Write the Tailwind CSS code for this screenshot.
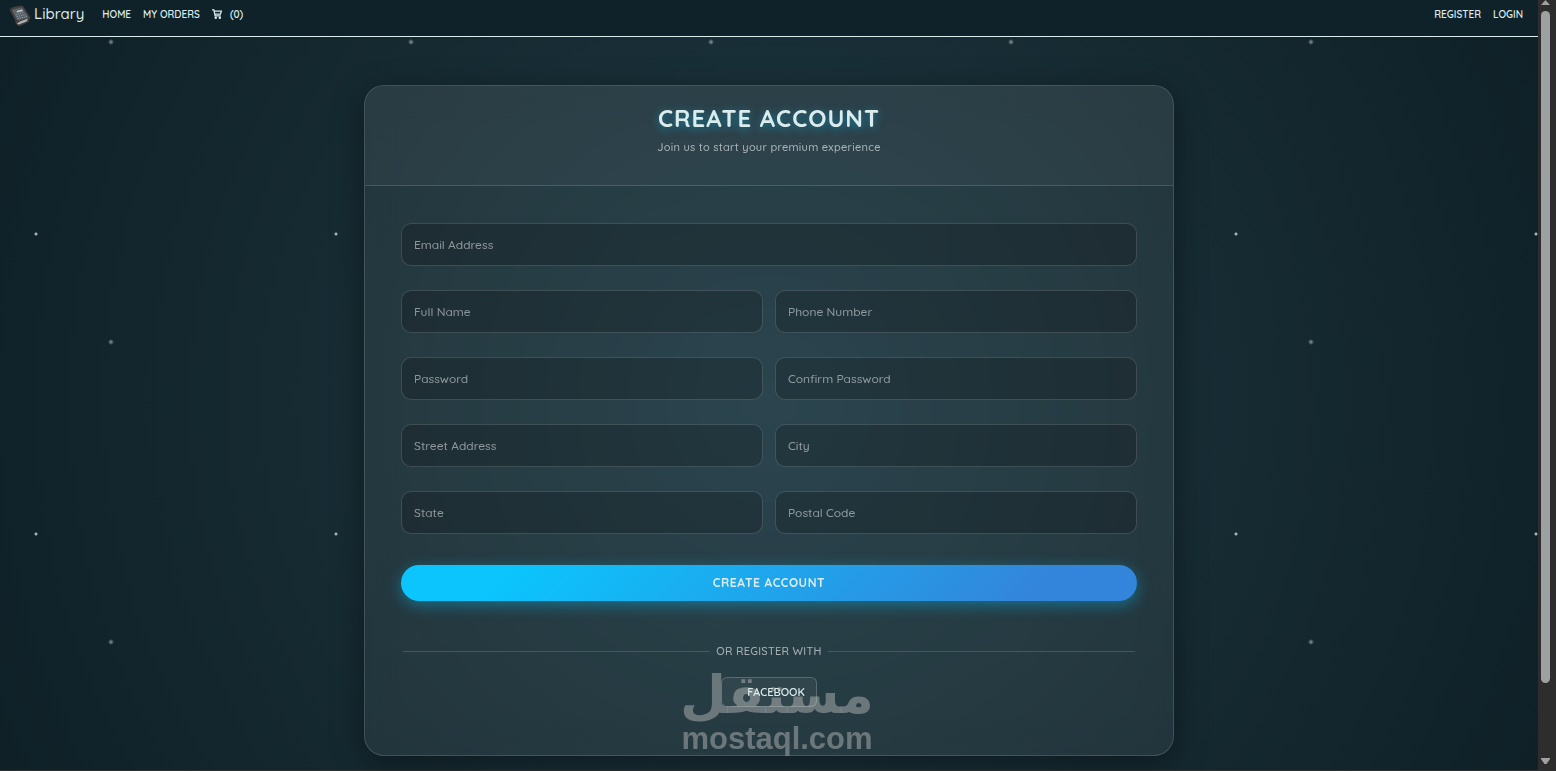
<!DOCTYPE html>
<html lang="en">
<head>
    <meta charset="UTF-8">
    <meta name="viewport" content="width=device-width, initial-scale=1.0">
    <title>Library - Register</title>
    <script src="https://cdn.jsdelivr.net/npm/@tailwindcss/browser@4"></script>
    <style>
        body {
            font-family: Quicksand, Lato, sans-serif;
        }
        /* Night sky: two stars per tile over a soft glow */
        .sky {
            background-image:
                radial-gradient(circle at 36px 197px, rgba(255,255,255,.75) 0, rgba(255,255,255,.6) 1px, transparent 2px),
                radial-gradient(circle at 111px 5px, rgba(255,255,255,.5) 0, rgba(255,255,255,.35) 1px, transparent 3px),
                radial-gradient(circle at center, #1e3a44 0%, #182d35 45%, #0f2027 100%);
            background-size: 300px 300px, 300px 300px, 100% 100%;
        }
    </style>
</head>
<body class="bg-[#303030] text-[#dcebeb]">
    <div class="flex min-h-screen pb-0.5">
        <div class="flex flex-1 flex-col">
            <!-- Navbar -->
            <header class="flex h-[37px] items-start border-b border-[#dcebeb] bg-[#102229] pl-2 pr-[15px]">
                <a href="#" class="flex h-7 items-center gap-0.5 text-[15px] font-medium">
                    <svg class="size-6" viewBox="0 0 24 24" aria-hidden="true">
                        <path d="M1.500 7.500L5 5l9-1.500 2 2 6.500 10-2 4.500-9.500 4.500-3-2.500L7 18z" fill="#45403f"/>
                        <path d="M4.500 7.500L14 5.500l6.500 10-10.500 3z" fill="#59636b"/>
                        <path d="M9 21.500l3-2 8-3-1.500 3-8 3z" fill="#aeb4b5"/>
                        <path d="M8.500 9l5.500-1.500 1 1.500-6 1.500z" fill="#c3c9ca"/>
                        <path d="M8 12.500l8-2M9 14.500l9-2M10 16.500l9-2M5 9l5 9" stroke="#8b969c" stroke-dasharray="1 1" fill="none"/>
                    </svg>
                    Library
                </a>
                <nav class="ml-[18px] flex h-7 flex-1 items-center gap-3 text-[10px] font-semibold">
                    <a href="#">HOME</a>
                    <a href="#">MY ORDERS</a>
                    <a href="#" class="flex items-center gap-2">
                        <svg class="size-2.5" viewBox="0 0 16 16" fill="none" stroke="currentColor" stroke-width="2" aria-hidden="true">
                            <path d="M0 1.500h3l2 9.500h9M3.500 3.500H15L13.500 8H5"/>
                            <circle cx="6" cy="14" r="1"/>
                            <circle cx="12.500" cy="14" r="1"/>
                        </svg>
                        (0)
                    </a>
                    <a href="#" class="ml-auto">REGISTER</a>
                    <a href="#">LOGIN</a>
                </nav>
            </header>

            <!-- Register card -->
            <main class="sky flex-1 px-6 pt-12 pb-3.5">
                <div class="relative mx-auto max-w-[810px] rounded-[20px] border border-white/15 bg-white/6 shadow-[0_8px_32px_rgba(0,0,0,0.4)] backdrop-blur-lg">
                    <!-- Watermark -->
                    <div class="pointer-events-none absolute inset-x-0 bottom-0 flex flex-col items-center pl-4 font-bold text-[#7d878a]/80">
                        <span lang="ar" dir="rtl" class="font-['DejaVu_Sans'] text-[53px]/[56px]">مستقل</span>
                        <span class="font-['Liberation_Sans'] text-[31px]/[32px]">mostaql.com</span>
                    </div>

                    <div class="rounded-t-[20px] border-b border-white/15 bg-white/3 pt-4 pb-[29px] text-center">
                        <h1 class="text-2xl font-bold tracking-[1px] [text-shadow:0_2px_8px_rgba(0,198,255,0.5)]">CREATE ACCOUNT</h1>
                        <p class="mt-1 text-[11px]/[18px] font-medium tracking-wide text-white/60">Join us to start your premium experience</p>
                    </div>

                    <form class="relative px-9 pt-[37px] pb-12" onsubmit="return false">
                        <div class="grid grid-cols-2 gap-x-3 gap-y-6 text-xs font-medium">
                            <div class="relative col-span-2 flex">
                                <input id="email" type="email" placeholder=" " class="peer h-[43px] w-full rounded-[10px] border border-white/15 bg-black/20 px-3">
                                <label for="email" class="absolute inset-y-0 left-[13px] hidden items-center text-white/50 peer-placeholder-shown:flex">Email Address</label>
                            </div>
                            <div class="relative flex">
                                <input id="name" type="text" placeholder=" " class="peer h-[43px] w-full rounded-[10px] border border-white/15 bg-black/20 px-3">
                                <label for="name" class="absolute inset-y-0 left-[13px] hidden items-center text-white/50 peer-placeholder-shown:flex">Full Name</label>
                            </div>
                            <div class="relative flex">
                                <input id="phone" type="tel" placeholder=" " class="peer h-[43px] w-full rounded-[10px] border border-white/15 bg-black/20 px-3">
                                <label for="phone" class="absolute inset-y-0 left-[13px] hidden items-center text-white/50 peer-placeholder-shown:flex">Phone Number</label>
                            </div>
                            <div class="relative flex">
                                <input id="password" type="password" placeholder=" " class="peer h-[43px] w-full rounded-[10px] border border-white/15 bg-black/20 px-3">
                                <label for="password" class="absolute inset-y-0 left-[13px] hidden items-center text-white/50 peer-placeholder-shown:flex">Password</label>
                            </div>
                            <div class="relative flex">
                                <input id="confirm" type="password" placeholder=" " class="peer h-[43px] w-full rounded-[10px] border border-white/15 bg-black/20 px-3">
                                <label for="confirm" class="absolute inset-y-0 left-[13px] hidden items-center text-white/50 peer-placeholder-shown:flex">Confirm Password</label>
                            </div>
                            <div class="relative flex">
                                <input id="street" type="text" placeholder=" " class="peer h-[43px] w-full rounded-[10px] border border-white/15 bg-black/20 px-3">
                                <label for="street" class="absolute inset-y-0 left-[13px] hidden items-center text-white/50 peer-placeholder-shown:flex">Street Address</label>
                            </div>
                            <div class="relative flex">
                                <input id="city" type="text" placeholder=" " class="peer h-[43px] w-full rounded-[10px] border border-white/15 bg-black/20 px-3">
                                <label for="city" class="absolute inset-y-0 left-[13px] hidden items-center text-white/50 peer-placeholder-shown:flex">City</label>
                            </div>
                            <div class="relative flex">
                                <input id="state" type="text" placeholder=" " class="peer h-[43px] w-full rounded-[10px] border border-white/15 bg-black/20 px-3">
                                <label for="state" class="absolute inset-y-0 left-[13px] hidden items-center text-white/50 peer-placeholder-shown:flex">State</label>
                            </div>
                            <div class="relative flex">
                                <input id="postal" type="text" placeholder=" " class="peer h-[43px] w-full rounded-[10px] border border-white/15 bg-black/20 px-3">
                                <label for="postal" class="absolute inset-y-0 left-[13px] hidden items-center text-white/50 peer-placeholder-shown:flex">Postal Code</label>
                            </div>
                        </div>

                        <button type="submit" class="mt-[31px] h-9 w-full rounded-full bg-[linear-gradient(135deg,#0bc5fc_15%,#3385db_85%)] text-xs font-bold tracking-wider shadow-[0_4px_15px_rgba(0,198,255,0.4)]">CREATE ACCOUNT</button>

                        <div class="mt-[41px] flex items-center gap-1.5 px-0.5 text-[11px]/[18px] font-medium tracking-wide text-white/60">
                            <span class="h-px flex-1 bg-white/15"></span>
                            OR REGISTER WITH
                            <span class="h-px flex-1 bg-white/15"></span>
                        </div>

                        <div class="mt-[17px] flex justify-center">
                            <button type="button" class="h-[30px] rounded-md border border-white/20 bg-white/5 pr-[11px] pl-[25px] text-[11px] font-semibold">FACEBOOK</button>
                        </div>
                    </form>
                </div>
            </main>
        </div>

        <!-- Scrollbar -->
        <div class="flex w-[18px] flex-col bg-[#2d2d2d] pl-[3px]" aria-hidden="true">
            <svg class="h-[11px] w-[9px]" viewBox="0 0 9 11"><path d="M4.500 0L9 5H0z" fill="#9da1a2"/></svg>
            <div class="w-[9px] flex-9 rounded-full bg-[#9da1a2]"></div>
            <div class="flex-1"></div>
            <svg class="h-3 w-[9px]" viewBox="0 0 9 12"><path d="M0 0h9v1L5.500 6h-2L0 1z" fill="#9da1a2"/></svg>
        </div>
    </div>
</body>
</html>
